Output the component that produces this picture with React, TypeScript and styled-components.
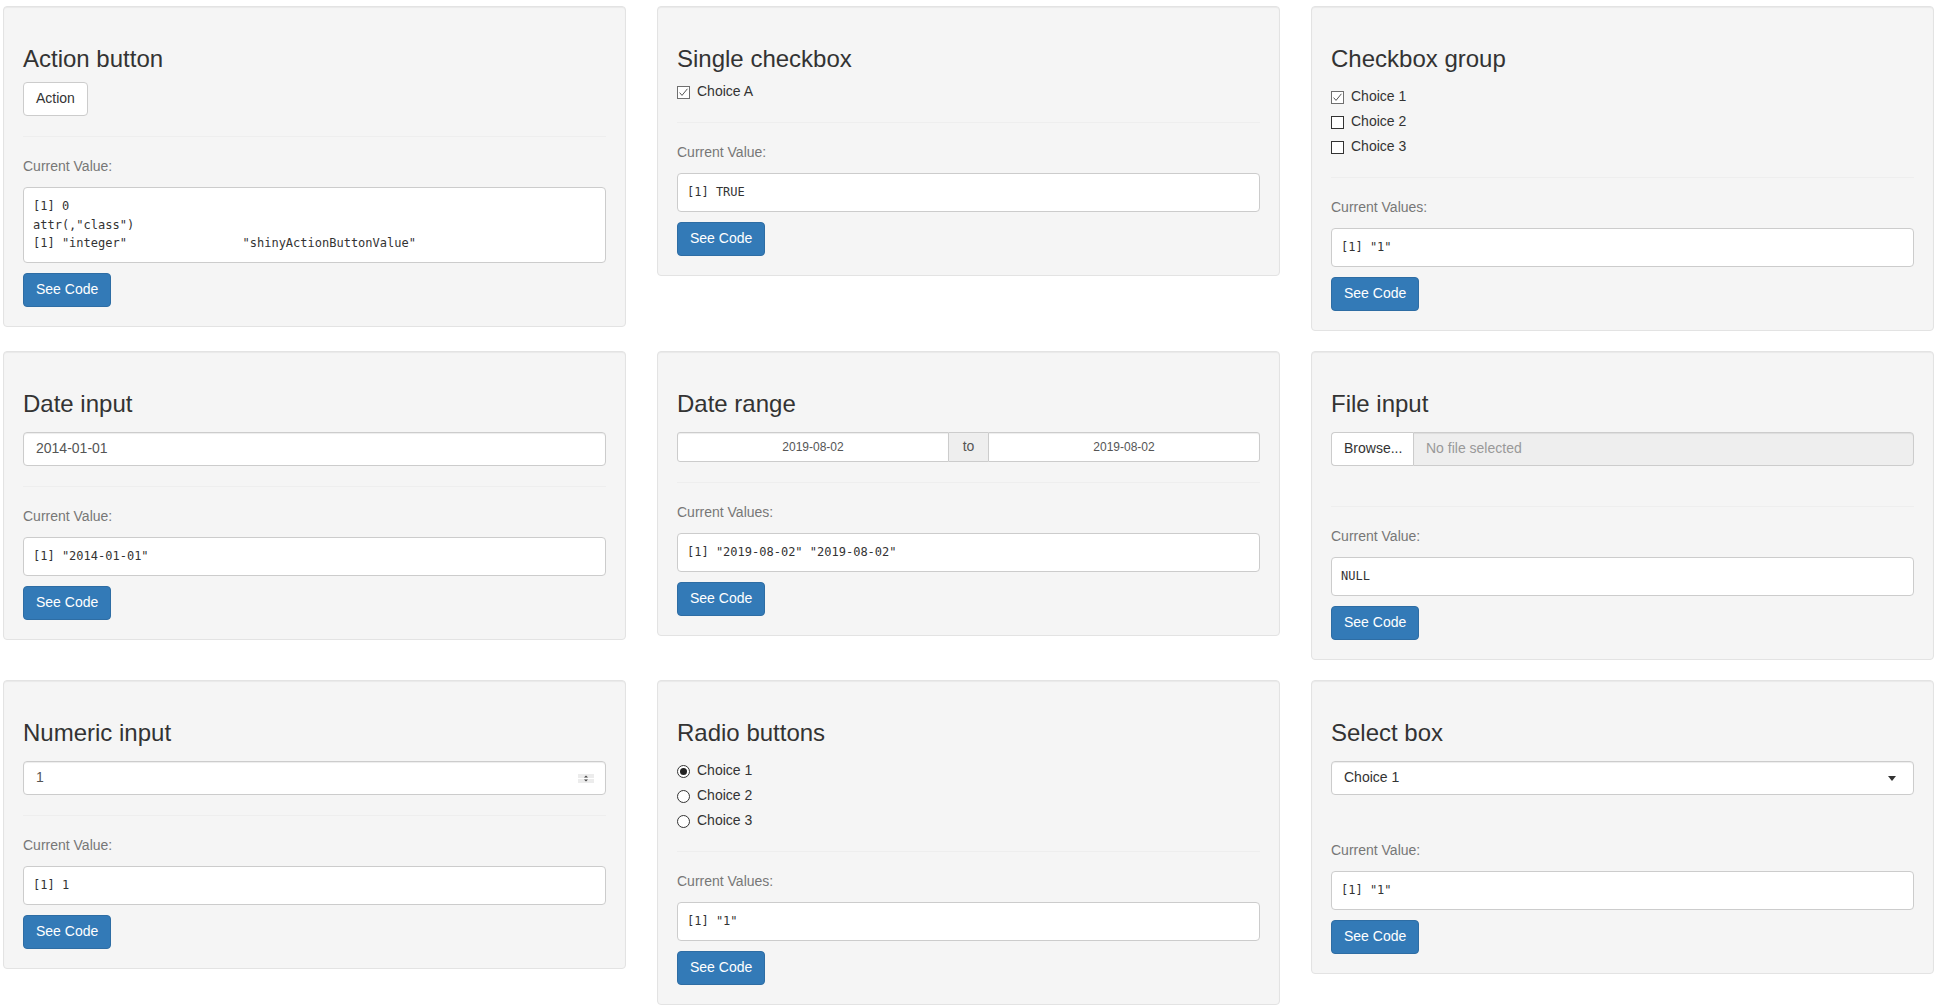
import styled, { createGlobalStyle } from "styled-components";

const GlobalStyle = createGlobalStyle`
  * {
    box-sizing: border-box;
  }
  body {
    margin: 0;
    background: #fff;
    font-family: "Liberation Sans", Arial, sans-serif;
    font-size: 14px;
    line-height: 1.42857;
    color: #333;
  }
`;

const Page = styled.div`
  display: grid;
  grid-template-columns: repeat(3, 623px);
  column-gap: 31px;
  row-gap: 20px;
  align-items: start;
  padding: 6px 0 0 3px;
`;

const Well = styled.section`
  background: #f5f5f5;
  border: 1px solid #e3e3e3;
  border-radius: 4px;
  box-shadow: inset 0 1px 1px rgba(0, 0, 0, 0.05);
  padding: 19px;
`;

const Title = styled.h3`
  margin: 20px 0 10px;
  font-size: 24px;
  font-weight: 500;
  line-height: 1.1;
  color: #333;
`;

// wraps the input; the empty shiny label adds 5px on top of most inputs
const ControlGroup = styled.div<{ $top?: number; $bottom?: number; $after?: number }>`
  padding-top: ${(p) => p.$top ?? 0}px;
  padding-bottom: ${(p) => p.$bottom ?? 0}px;
  margin-bottom: ${(p) => p.$after ?? 0}px;
`;

const Divider = styled.hr`
  margin: 20px 0;
  height: 0;
  border: 0;
  border-top: 1px solid #eee;
`;

const ValueLabel = styled.p`
  margin: 0 0 10px;
  color: #777;
`;

const Output = styled.pre`
  margin: 0 0 10px;
  padding: 9px;
  font-family: "DejaVu Sans Mono", "Liberation Mono", monospace;
  font-size: 12px;
  line-height: 18.5px;
  color: #333;
  background: #fff;
  border: 1px solid #ccc;
  border-radius: 4px;
  white-space: pre;
  overflow: hidden;
`;

const Button = styled.button<{ $primary?: boolean }>`
  display: block;
  padding: 6px 12px;
  font-family: inherit;
  font-size: 14px;
  line-height: 1.42857;
  border-radius: 4px;
  border: 1px solid ${(p) => (p.$primary ? "#2e6da4" : "#ccc")};
  background: ${(p) => (p.$primary ? "#337ab7" : "#fff")};
  color: ${(p) => (p.$primary ? "#fff" : "#333")};
  cursor: pointer;
`;

const Field = styled.div`
  display: flex;
  align-items: center;
  justify-content: space-between;
  height: 34px;
  padding: 6px 11px 6px 12px;
  background: #fff;
  border: 1px solid #ccc;
  border-radius: 4px;
  box-shadow: inset 0 1px 1px rgba(0, 0, 0, 0.075);
  color: #555;
`;

const SelectText = styled.span`
  color: #333;
`;

const Caret = styled.span`
  width: 0;
  height: 0;
  margin-right: 6px;
  border-style: solid;
  border-width: 5px 4px 0;
  border-color: #333 transparent transparent;
`;

const RangeGroup = styled.div`
  display: flex;
  height: 30px;
`;

const RangeInput = styled.div<{ $side: "left" | "right" }>`
  flex: 1;
  display: flex;
  align-items: center;
  justify-content: center;
  font-size: 12px;
  color: #555;
  background: #fff;
  border: 1px solid #ccc;
  border-radius: ${(p) => (p.$side === "left" ? "3px 0 0 3px" : "0 3px 3px 0")};
  box-shadow: inset 0 1px 1px rgba(0, 0, 0, 0.075);
`;

const RangeAddon = styled.span`
  width: 39px;
  display: flex;
  align-items: center;
  justify-content: center;
  background: #eee;
  border-top: 1px solid #ccc;
  border-bottom: 1px solid #ccc;
  color: #555;
`;

const FileGroup = styled.div`
  display: flex;
  height: 34px;
`;

const BrowseButton = styled.span`
  display: flex;
  align-items: center;
  padding: 6px 12px;
  width: 82px;
  background: #fff;
  border: 1px solid #ccc;
  border-right: 0;
  border-radius: 4px 0 0 4px;
  color: #333;
`;

const FileName = styled.span`
  flex: 1;
  display: flex;
  align-items: center;
  padding: 6px 12px;
  background: #eee;
  border: 1px solid #ccc;
  border-radius: 0 4px 4px 0;
  box-shadow: inset 0 1px 1px rgba(0, 0, 0, 0.075);
  color: #999;
`;

const ChoiceList = styled.div`
  display: flex;
  flex-direction: column;
  gap: 5px;
`;

const Choice = styled.label`
  display: flex;
  align-items: center;
  gap: 7px;
  height: 20px;
  color: #333;
  cursor: pointer;
`;

const CheckIcon = ({ checked }: { checked: boolean }) => (
  <svg width="13" height="13" viewBox="0 0 13 13">
    <rect x="0.5" y="0.5" width="12" height="12" fill="#fff" stroke={checked ? "#6f6f6f" : "#333"} />
    {checked && <path d="M2.6 6.6 L5 9.4 L10.4 2.8" fill="none" stroke="#555" strokeWidth="1" />}
  </svg>
);

const RadioIcon = ({ checked }: { checked: boolean }) => (
  <svg width="13" height="13" viewBox="0 0 13 13">
    <circle cx="6.5" cy="6.5" r="6" fill="#fff" stroke="#333" />
    {checked && <circle cx="6.5" cy="6.5" r="3.5" fill="#222" />}
  </svg>
);

const Spinner = () => (
  <svg width="16" height="9" viewBox="0 0 16 9">
    <rect width="16" height="9" fill="#ececec" />
    <path d="M6 3.6 L8 1.6 L10 3.6 Z" fill="#444" />
    <line x1="0" y1="4.5" x2="16" y2="4.5" stroke="#fff" />
    <path d="M6 5.4 L8 7.4 L10 5.4 Z" fill="#444" />
  </svg>
);

const choices = ["Choice 1", "Choice 2", "Choice 3"];

interface ICard {
  title: string;
  control: React.ReactNode;
  top?: number;
  bottom?: number;
  after?: number;
  label: string;
  value: string;
  divider?: boolean;
}

const cards: ICard[] = [
  {
    title: "Action button",
    control: <Button>Action</Button>,
    label: "Current Value:",
    value: '[1] 0\nattr(,"class")\n[1] "integer"                "shinyActionButtonValue"',
  },
  {
    title: "Single checkbox",
    control: (
      <Choice>
        <CheckIcon checked />
        Choice A
      </Choice>
    ),
    label: "Current Value:",
    value: "[1] TRUE",
  },
  {
    title: "Checkbox group",
    top: 5,
    control: (
      <ChoiceList>
        {choices.map((c, i) => (
          <Choice key={c}>
            <CheckIcon checked={i === 0} />
            {c}
          </Choice>
        ))}
      </ChoiceList>
    ),
    label: "Current Values:",
    value: '[1] "1"',
  },
  {
    title: "Date input",
    top: 5,
    control: <Field>2014-01-01</Field>,
    label: "Current Value:",
    value: '[1] "2014-01-01"',
  },
  {
    title: "Date range",
    top: 5,
    control: (
      <RangeGroup>
        <RangeInput $side="left">2019-08-02</RangeInput>
        <RangeAddon>to</RangeAddon>
        <RangeInput $side="right">2019-08-02</RangeInput>
      </RangeGroup>
    ),
    label: "Current Values:",
    value: '[1] "2019-08-02" "2019-08-02"',
  },
  {
    title: "File input",
    top: 5,
    bottom: 20,
    control: (
      <FileGroup>
        <BrowseButton>Browse...</BrowseButton>
        <FileName>No file selected</FileName>
      </FileGroup>
    ),
    label: "Current Value:",
    value: "NULL",
  },
  {
    title: "Numeric input",
    top: 5,
    control: (
      <Field>
        1
        <Spinner />
      </Field>
    ),
    label: "Current Value:",
    value: "[1] 1",
  },
  {
    title: "Radio buttons",
    top: 5,
    control: (
      <ChoiceList>
        {choices.map((c, i) => (
          <Choice key={c}>
            <RadioIcon checked={i === 0} />
            {c}
          </Choice>
        ))}
      </ChoiceList>
    ),
    label: "Current Values:",
    value: '[1] "1"',
  },
  {
    title: "Select box",
    top: 5,
    after: 46,
    control: (
      <Field>
        <SelectText>Choice 1</SelectText>
        <Caret />
      </Field>
    ),
    label: "Current Value:",
    value: '[1] "1"',
    divider: false,
  },
];

const App = () => {
  return (
    <>
      <GlobalStyle />
      <Page>
        {cards.map((card) => (
          <Well key={card.title}>
            <Title>{card.title}</Title>
            <ControlGroup $top={card.top} $bottom={card.bottom} $after={card.after}>
              {card.control}
            </ControlGroup>
            {card.divider !== false && <Divider />}
            <ValueLabel>{card.label}</ValueLabel>
            <Output>{card.value}</Output>
            <Button $primary>See Code</Button>
          </Well>
        ))}
      </Page>
    </>
  );
};

export default App;
